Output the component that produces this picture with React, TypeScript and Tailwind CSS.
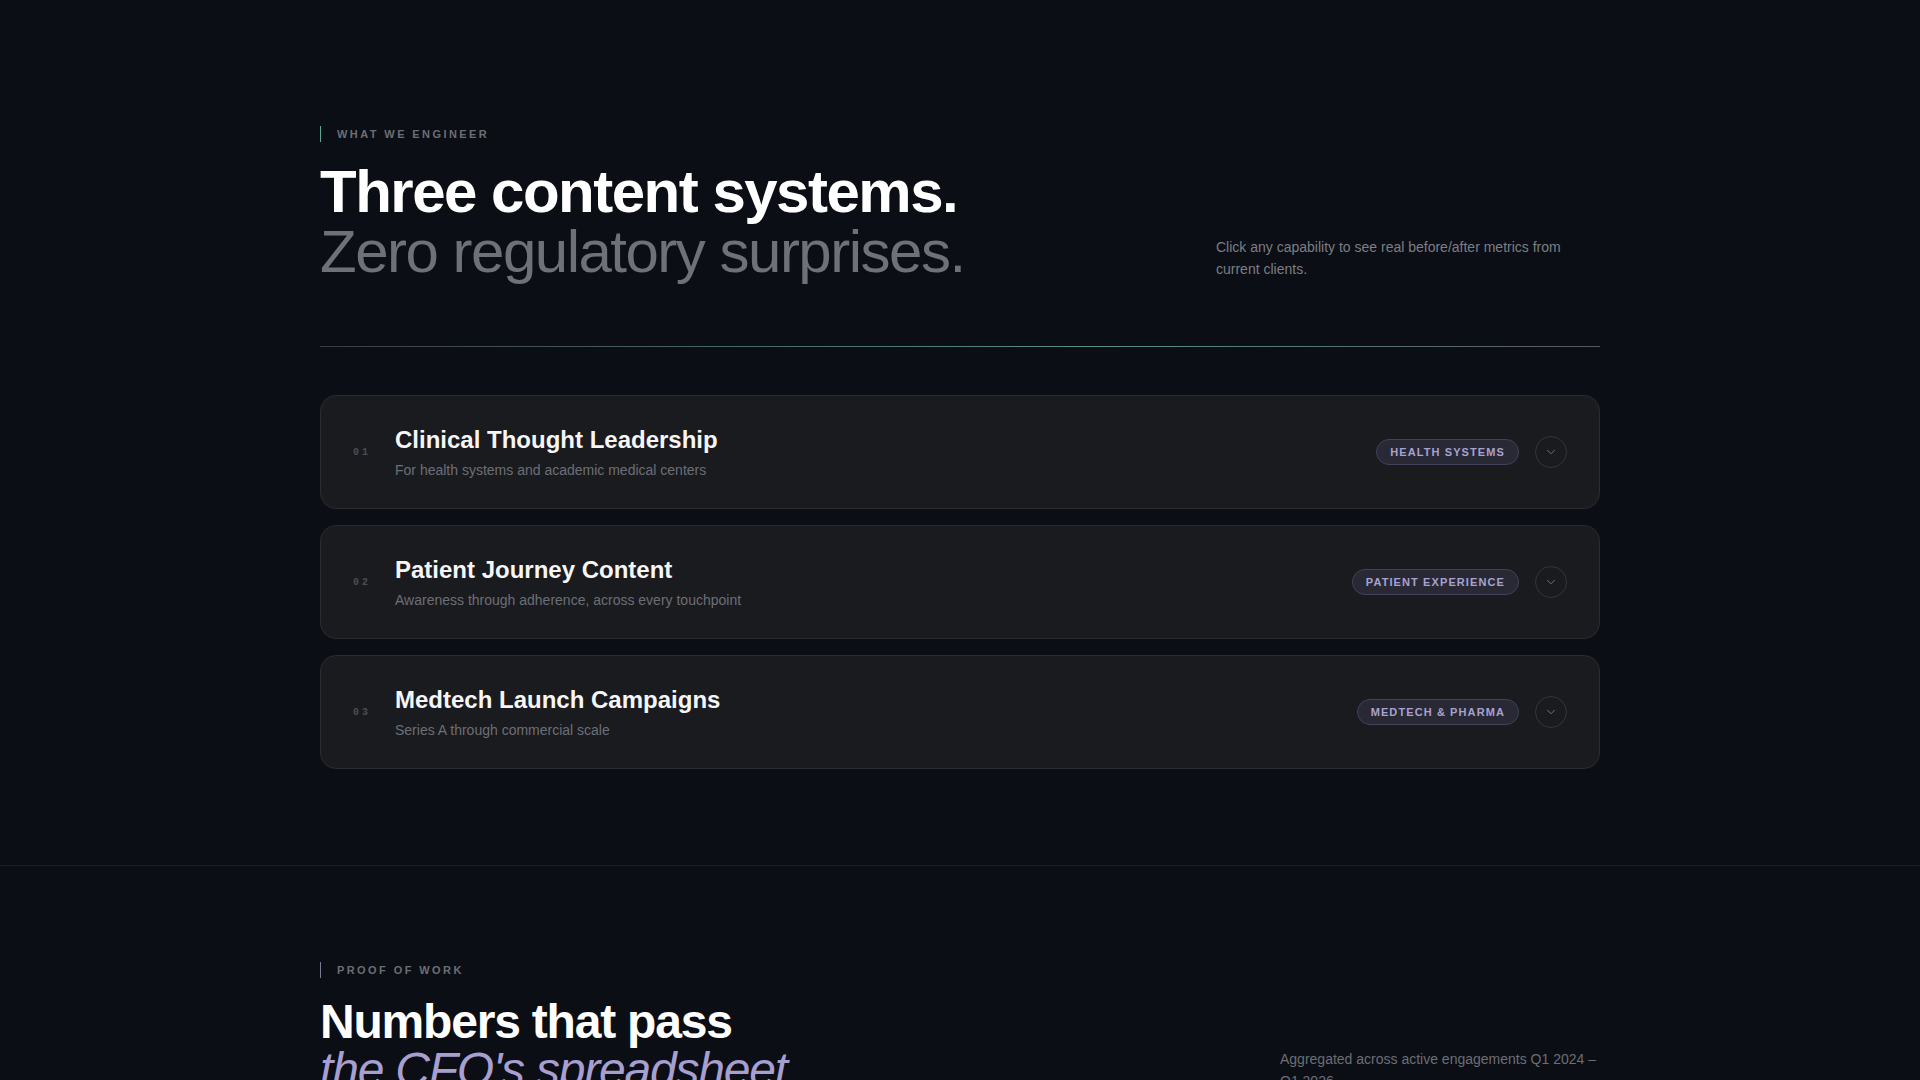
import { ChevronDown } from "lucide-react";

const systems = [
  { n: "01", title: "Clinical Thought Leadership", sub: "For health systems and academic medical centers", tag: "Health Systems" },
  { n: "02", title: "Patient Journey Content", sub: "Awareness through adherence, across every touchpoint", tag: "Patient Experience" },
  { n: "03", title: "Medtech Launch Campaigns", sub: "Series A through commercial scale", tag: "Medtech & Pharma" },
];

function Eyebrow({ label, bar }: { label: string; bar: string }) {
  return (
    <div className="flex items-center gap-4 h-4">
      <span className={`w-px h-4 ${bar}`} />
      <span className="text-[11px] leading-4 font-bold uppercase tracking-[0.22em] text-[#6b6e74]">{label}</span>
    </div>
  );
}

export default function App() {
  return (
    <div className="min-h-screen bg-[#0b0e14] font-['Liberation_Sans',Arial,sans-serif] text-white">
      <section className="pt-[126px] pb-24">
        <div className="w-[1280px] mx-auto">
          <Eyebrow label="What we engineer" bar="bg-[#5aa893]" />
          <div className="flex items-end justify-between mt-5">
            <h2 className="text-[60px] leading-none tracking-[-0.025em]">
              <span className="block font-bold text-white">Three content systems.</span>
              <span className="block font-normal text-[#6f7178]">Zero regulatory surprises.</span>
            </h2>
            <p className="w-[384px] text-[14px] leading-[22px] text-[#7b7e85] pb-[2px]">
              Click any capability to see real before/after metrics from current clients.
            </p>
          </div>
          <div className="mt-16 h-px bg-linear-to-r from-[#393c43] via-[#55907d] via-60% to-[#55575c]" />

          <div className="mt-12 flex flex-col gap-4">
            {systems.map((s) => (
              <div
                key={s.n}
                className="flex items-center justify-between rounded-2xl border border-[#2a2c32] bg-[#1a1b1f] px-8 py-7"
              >
                <div className="flex items-center gap-4">
                  <span className="w-[26px] font-['Liberation_Mono',monospace] text-[10px] font-bold tracking-[0.3em] text-[#4a4d54]">
                    {s.n}
                  </span>
                  <div>
                    <h3 className="text-[24px] leading-8 font-bold text-[#f6f6f7]">{s.title}</h3>
                    <p className="mt-1 text-[14px] leading-5 text-[#6c6f76]">{s.sub}</p>
                  </div>
                </div>
                <div className="flex items-center gap-4">
                  <span className="rounded-full border border-[#43415a] bg-[#292935] px-[13px] py-1 text-[11px] leading-4 font-bold uppercase tracking-[0.1em] text-[#a8a2cf]">
                    {s.tag}
                  </span>
                  <span className="w-8 h-8 rounded-full border border-[#33353b] flex items-center justify-center">
                    <ChevronDown className="w-3.5 h-3.5 text-[#7c7e86]" strokeWidth={1.5} />
                  </span>
                </div>
              </div>
            ))}
          </div>
        </div>
      </section>

      <section className="border-t border-[#1b1e24] pt-24 pb-24">
        <div className="w-[1280px] mx-auto">
          <Eyebrow label="Proof of work" bar="bg-[#7d7898]" />
          <div className="flex items-end justify-between mt-5">
            <h2 className="text-[48px] leading-none tracking-[-0.025em]">
              <span className="block font-bold text-white">Numbers that pass</span>
              <span className="block italic font-normal text-[#a69fd0]">the CFO's spreadsheet</span>
            </h2>
            <p className="w-[320px] text-[14px] leading-[22px] text-[#6c6f76] pb-[2px]">
              Aggregated across active engagements Q1 2024 – Q1 2026
            </p>
          </div>
        </div>
      </section>
    </div>
  );
}
